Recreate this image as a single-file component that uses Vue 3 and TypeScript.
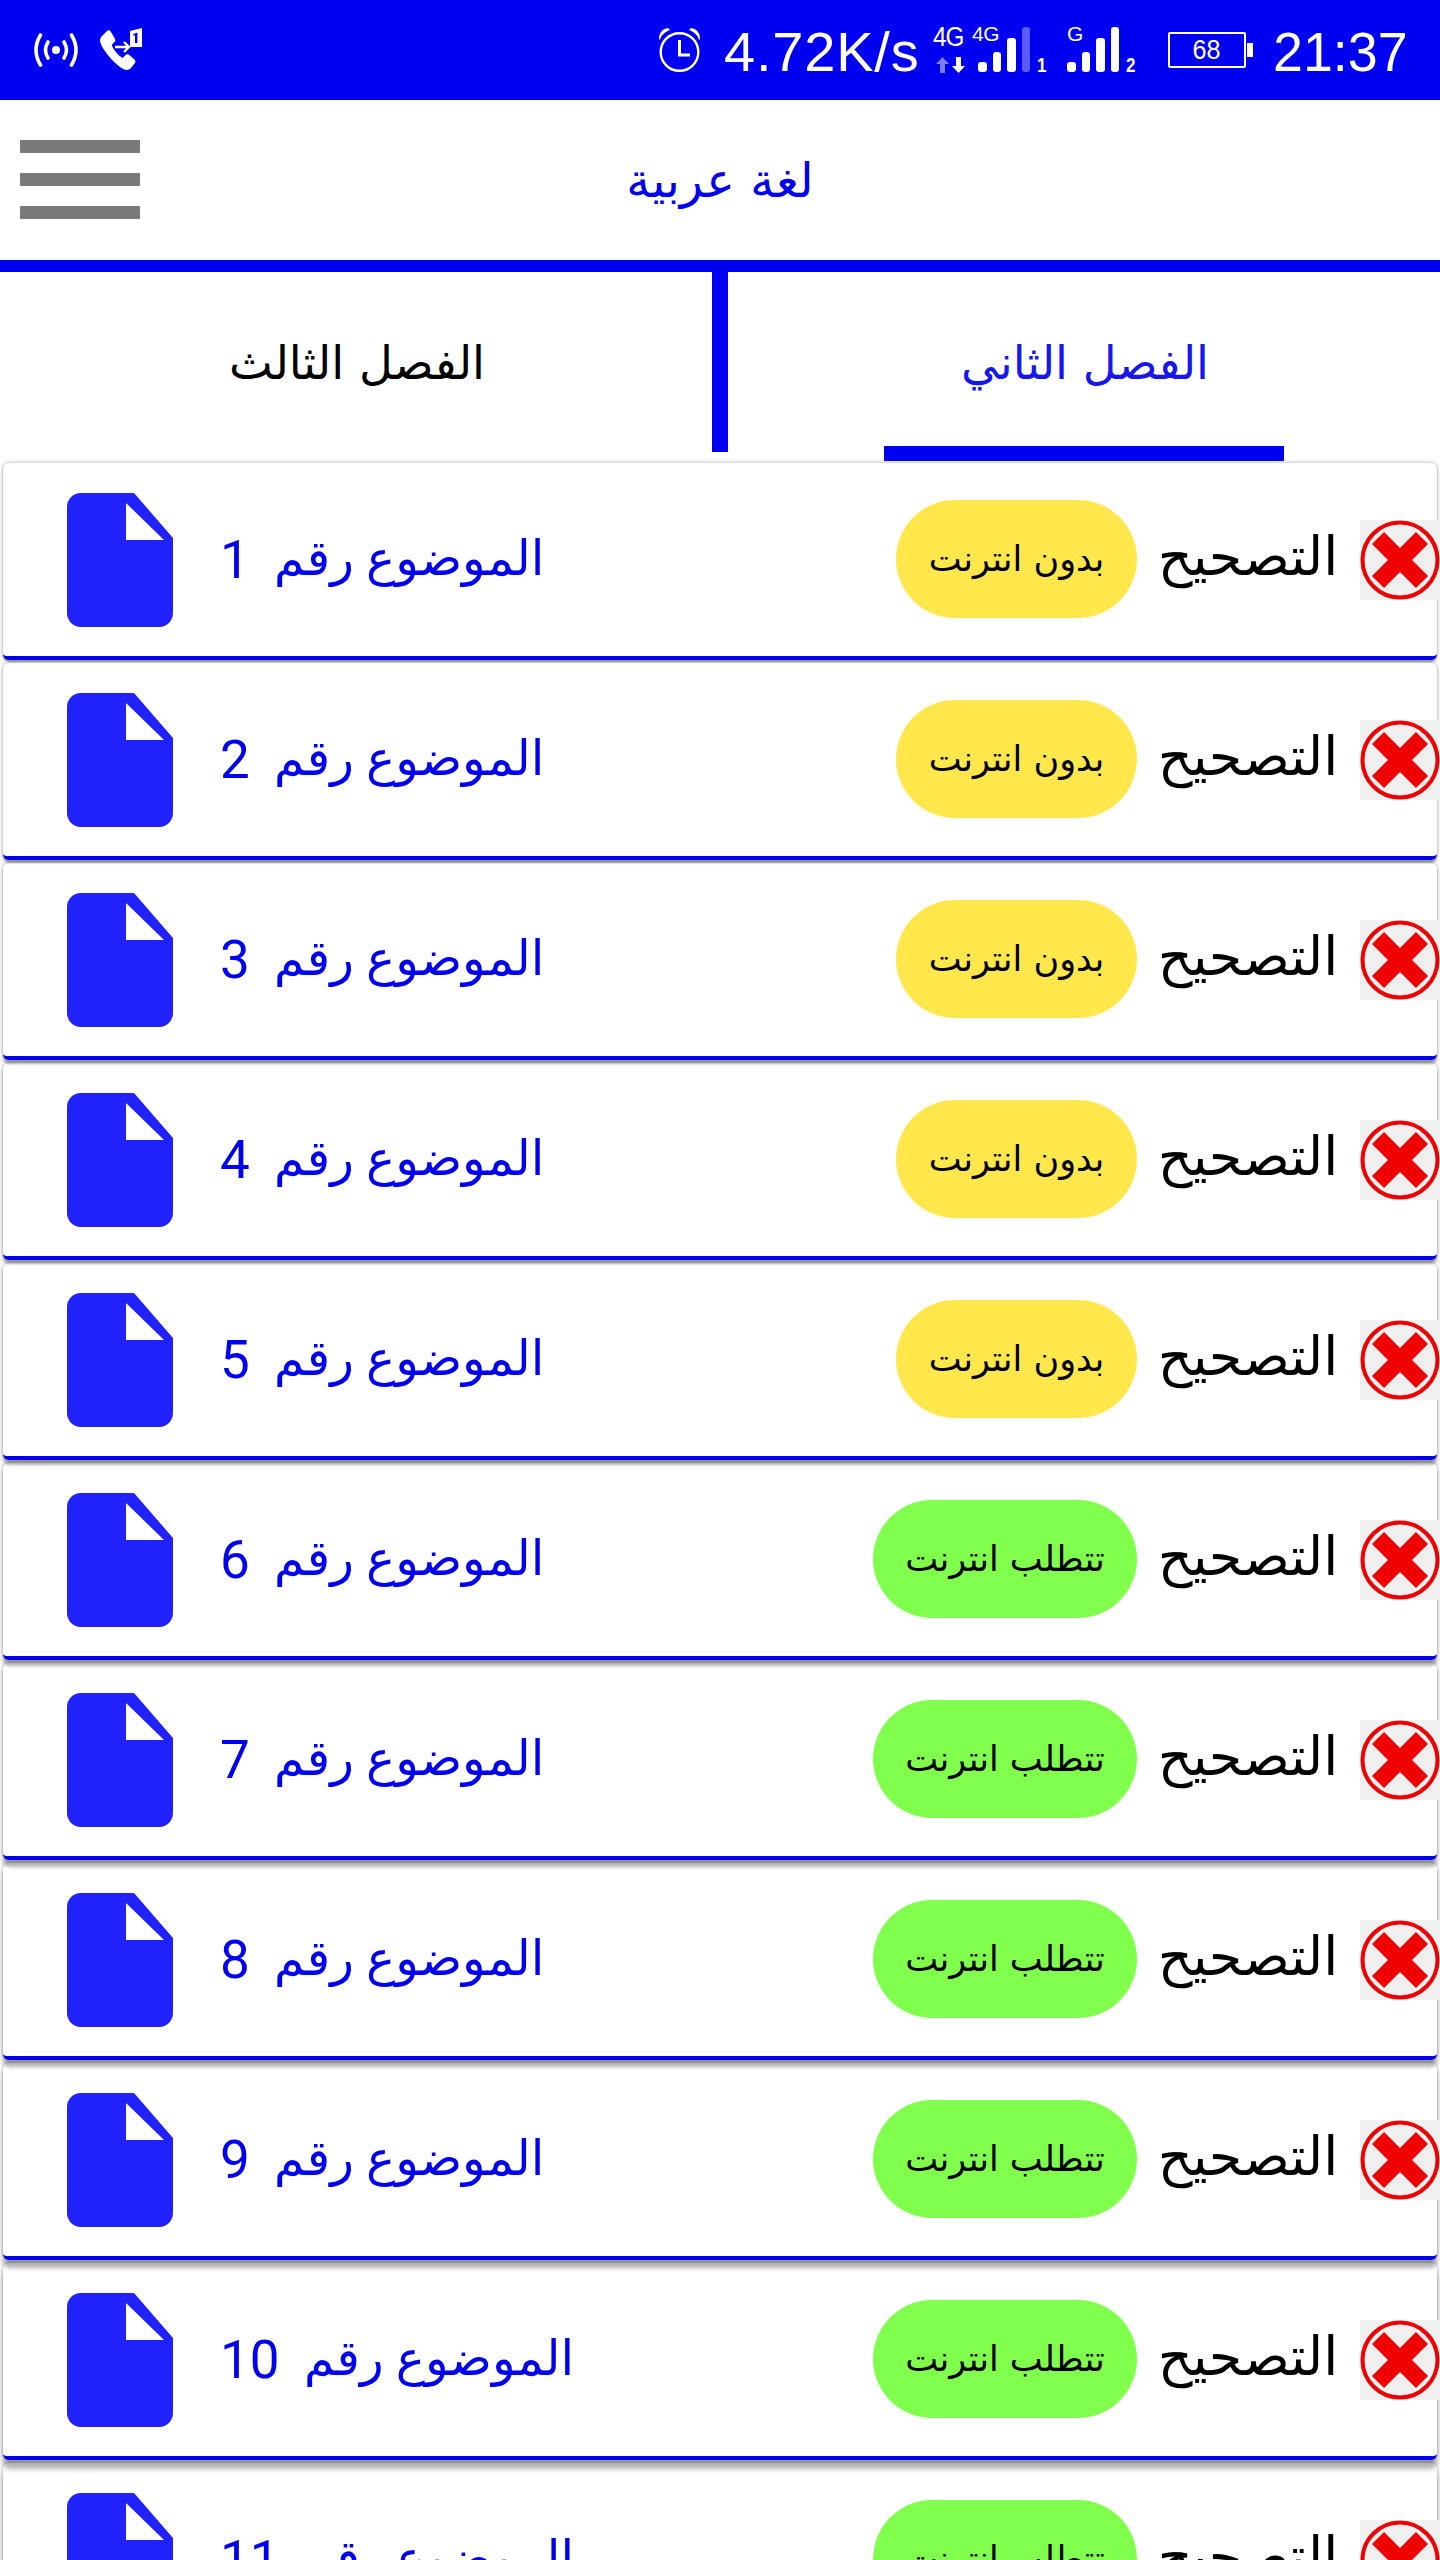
<script setup lang="ts">
interface Row {
  n: number
  online: boolean
}
const rows: Row[] = Array.from({ length: 11 }, (_, i) => ({ n: i + 1, online: i >= 5 }))
</script>

<template>
  <div class="page">
    <div class="status">
      <div class="st-left">
        <svg class="hot" width="44" height="34" viewBox="0 0 44 34" fill="none" stroke="#fff" stroke-width="3.6" stroke-linecap="round">
          <circle cx="22" cy="17" r="4" fill="#fff" stroke="none" />
          <path d="M14 9q-5 8 0 16M30 9q5 8 0 16" />
          <path d="M6.500 2q-9 15 0 30M37.500 2q9 15 0 30" />
        </svg>
        <svg class="call" width="44" height="43" viewBox="0 0 44 43">
          <path fill="#fff" d="M3 8 8 3c1-1 3-1 4 1l4 7c.6 1 .4 2-.4 3l-3 3c2 5 6 10 11 13l3-3c1-1 2-1 3-.4l6 5c1 1 1 3 0 4l-4 5c-2 2-6 2-10-1C13 33 2 20 1 13c0-2 .8-4 2-5Z" />
          <path fill="none" stroke="#fff" stroke-width="2.4" d="M16 19h14m-5-5 5 5-5 5" />
          <path fill="#fff" fill-rule="evenodd" d="M31 3l12-3v19H31ZM36 7v8h2.400V4.500l-4 1.500v2Z" />
        </svg>
      </div>
      <div class="st-right">
        <svg class="alarm" width="43" height="44" viewBox="0 0 43 44" fill="none" stroke="#fff" stroke-width="2.4">
          <circle cx="21.500" cy="24" r="18.800" />
          <path d="M21.500 12v15H32" stroke-width="3" />
          <path fill="#fff" stroke="none" d="M1 11C1 5 4 1 10 0l2 2C7 4 3 7 2 12ZM42 11C42 5 39 1 33 0l-2 2c5 2 9 5 10 10Z" />
        </svg>
        <span class="speed">4.72K/s</span>
        <div class="sim sim-one">
          <div class="net">
            <span class="net-big">4G</span>
            <div class="arrows">
              <svg width="13" height="16" viewBox="0 0 13 16" fill="#7a7aff"><path d="M6.500 0 13 7H9v9H4V7H0Z" /></svg>
              <svg width="13" height="16" viewBox="0 0 13 16" fill="#fff"><path d="M6.500 16 13 9H9V0H4v9H0Z" /></svg>
            </div>
          </div>
          <div class="bars">
            <span class="net-small">4G</span>
            <i class="b1"></i><i class="b2"></i><i class="b3"></i><i class="b4 dim"></i>
          </div>
          <span class="sim-no">1</span>
        </div>
        <div class="sim sim-two">
          <div class="bars">
            <span class="net-small">G</span>
            <i class="b1"></i><i class="b2"></i><i class="b3"></i><i class="b4"></i>
          </div>
          <span class="sim-no">2</span>
        </div>
        <div class="battery"><span>68</span></div>
        <span class="clock">21:37</span>
      </div>
    </div>

    <header class="appbar">
      <div class="burger"><i></i><i></i><i></i></div>
      <h1 dir="rtl">لغة عربية</h1>
    </header>

    <nav class="tabs">
      <div class="tab" dir="rtl">الفصل الثالث</div>
      <div class="tab active" dir="rtl">الفصل الثاني</div>
    </nav>

    <main class="list">
      <article v-for="r in rows" :key="r.n" class="card" :style="{ '--i': r.n }">
        <svg class="doc" width="106" height="134" viewBox="0 0 106 134">
          <path fill="#2222ff" d="M14 0H67L106 45V120A14 14 0 0 1 92 134H14A14 14 0 0 1 0 120V14A14 14 0 0 1 14 0Z" />
          <path fill="#fff" d="M59 10 97 47H59Z" />
        </svg>
        <div class="topic" dir="rtl">الموضوع رقم&nbsp; <span class="num">{{ r.n }}</span></div>
        <div class="pill" :class="r.online ? 'green' : 'yellow'" dir="rtl">{{ r.online ? 'تتطلب انترنت' : 'بدون انترنت' }}</div>
        <div class="fix" dir="rtl">التصحيح</div>
        <div class="mark">
          <svg width="80" height="80" viewBox="0 0 80 80">
            <circle cx="40" cy="40" r="37.500" fill="none" stroke="#ee0000" stroke-width="4" />
            <path fill="none" stroke="#ee0000" stroke-width="17" d="M18 18 62 62M62 18 18 62" />
          </svg>
        </div>
      </article>
    </main>
  </div>
</template>

<style>
html, body { margin: 0; background: #fff; }
</style>

<style scoped>
.page {
  width: 1440px;
  height: 2560px;
  overflow: hidden;
  background: #fff;
  font-family: "DejaVu Sans", sans-serif;
}
.status {
  height: 100px;
  background: #0000f0;
  color: #fff;
  display: flex;
  justify-content: space-between;
  font-family: "Liberation Sans", sans-serif;
}
.st-left {
  display: flex;
  align-items: flex-start;
  padding: 28px 0 0 34px;
  gap: 21px;
}
.hot { margin-top: 5px; }
.st-right {
  display: flex;
  align-items: flex-start;
  padding-right: 33px;
}
.alarm { margin-top: 28px; }
.speed {
  width: 190px;
  margin: 20px 19px 0 23px;
  font-size: 56px;
  line-height: 64px;
  letter-spacing: .8px;
  white-space: nowrap;
}
.sim { display: flex; align-items: flex-start; height: 100px; position: relative; }
.net { width: 45px; height: 72px; padding-top: 27px; box-sizing: border-box; position: relative; }
.net-big {
  display: block;
  font-size: 27px;
  line-height: 20px;
  letter-spacing: -1px;
  transform: scaleX(.9);
  transform-origin: left;
}
.arrows { display: flex; gap: 3px; margin: 10px 0 0 3px; }
.bars {
  position: relative;
  display: flex;
  align-items: flex-end;
  gap: 6px;
  height: 72px;
  width: 52px;
}
.bars i { width: 8.500px; background: #fff; border-radius: 3px; display: block; }
.bars .b1 { height: 10px; }
.bars .b2 { height: 20px; }
.bars .b3 { height: 34px; }
.bars .b4 { height: 45px; }
.bars .dim { background: #5a5aff; }
.net-small {
  position: absolute;
  left: -6px;
  top: 26px;
  font-size: 21px;
  line-height: 16px;
  font-weight: 400;
  letter-spacing: -.5px;
}
.sim-two .net-small { left: 0; }
.sim-no {
  margin: 55px 0 0 7px;
  font-size: 20px;
  line-height: 20px;
  font-weight: 700;
  transform: scaleX(.85);
  transform-origin: left;
}
.sim-one { width: 134px; }
.sim-two { width: 101px; }
.battery {
  width: 78px;
  height: 36px;
  margin-top: 32px;
  box-sizing: border-box;
  border: 2.500px solid #fff;
  border-radius: 2px;
  position: relative;
  display: flex;
  align-items: center;
  justify-content: center;
  font-size: 28px;
  margin-right: 27px;
}
.battery span { transform: scaleX(.9); }
.battery::after {
  content: "";
  position: absolute;
  right: -9px;
  top: 9px;
  width: 6px;
  height: 14px;
  background: #fff;
}
.clock {
  width: 134px;
  margin-top: 20px;
  font-size: 56px;
  line-height: 64px;
  transform: scaleX(.96);
  transform-origin: left;
}
.appbar {
  height: 160px;
  border-bottom: 12px solid #0000f0;
  position: relative;
  display: flex;
  align-items: center;
  justify-content: center;
}
.burger {
  position: absolute;
  left: 20px;
  top: 40px;
  width: 120px;
  display: flex;
  flex-direction: column;
  gap: 20px;
}
.burger i { display: block; height: 13px; background: #7a7a7a; }
h1 {
  margin: 0;
  font-size: 48px;
  font-weight: 400;
  color: #0000f0;
}
.tabs {
  height: 191px;
  display: grid;
  grid-template-columns: 720px 720px;
  position: relative;
}
.tabs::after {
  content: "";
  position: absolute;
  left: 712px;
  top: 0;
  width: 16px;
  height: 180px;
  background: #0000f0;
}
.tab {
  display: flex;
  align-items: center;
  justify-content: center;
  padding: 0 6px 9px 0;
  font-size: 46.500px;
  color: #000;
  position: relative;
}
.tab.active { color: #1616ee; padding: 0 0 9px 10px; }
.tab.active::after {
  content: "";
  position: absolute;
  left: 164px;
  bottom: 2px;
  width: 400px;
  height: 15px;
  background: #0000f0;
}
.list { display: flex; flex-direction: column; }
.card {
  height: 200px;
  box-sizing: border-box;
  flex: none;
  display: flex;
  align-items: center;
  position: relative;
  z-index: calc(30 - var(--i));
}
.card::before {
  content: "";
  position: absolute;
  left: 3px;
  right: 3px;
  top: 0;
  height: 197px;
  box-sizing: border-box;
  background: #fff;
  border-bottom: 4px solid #0000f0;
  border-radius: 6px;
  box-shadow: 0 calc(1px + var(--i) * .75px) calc(1px + var(--i) * .4px) rgba(0, 0, 0, .3), 0 0 4px rgba(0, 0, 0, .35);
}
.card > * { position: relative; }
.doc { margin: -6px 0 0 67px; flex: none; }
.topic {
  margin: -8px 0 0 47px;
  font-size: 49px;
  line-height: 70px;
  color: #0000f0;
  font-family: Roboto, "DejaVu Sans", sans-serif;
  white-space: nowrap;
}
.num { font-size: 53px; vertical-align: -3px; }
.pill {
  margin-left: auto;
  margin-right: 21px;
  margin-top: -8px;
  height: 118px;
  border-radius: 59px;
  display: flex;
  align-items: center;
  justify-content: center;
  font-size: 35px;
  color: #000;
  box-sizing: border-box;
  white-space: nowrap;
}
.yellow { width: 241px; background: #ffe74c; }
.green { width: 264px; background: #80ff4d; }
.fix {
  width: 180px;
  margin-right: 22px;
  margin-top: -12px;
  font-size: 54px;
  line-height: 70px;
  color: #000;
  white-space: nowrap;
  display: flex;
  justify-content: center;
}
.mark {
  width: 80px;
  height: 80px;
  flex: none;
  background: #f0f0f0;
  margin-top: -6px;
}
.mark svg { display: block; }
</style>
